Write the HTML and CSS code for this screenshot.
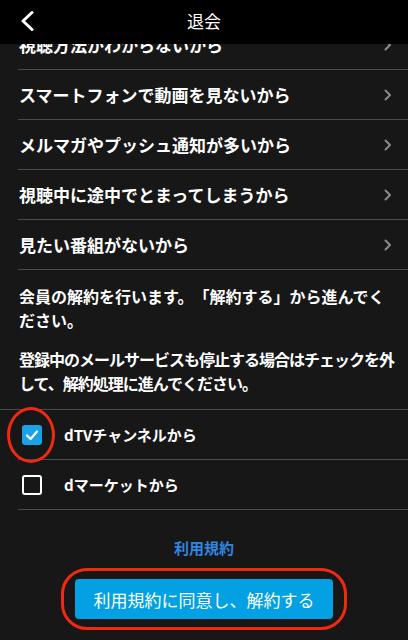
FILE: index.html
```html
<!DOCTYPE html>
<html lang="ja">
<head>
<meta charset="utf-8">
<title>退会</title>
<link rel="stylesheet" href="styles.css">
</head>
<body>
<div class="app">
  <header class="header">
    <button class="back" aria-label="戻る">
      <svg width="14" height="22" viewBox="0 0 14 22"><path d="M12 2.5 L3 11 L12 19.5" fill="none" stroke="#fff" stroke-width="3" stroke-linecap="round" stroke-linejoin="round"/></svg>
    </button>
    <h1 class="title">退会</h1>
    <span class="spacer"></span>
  </header>
  <main class="viewport">
    <div class="content">
      <ul class="reasons">
        <li class="reason"><span>視聴方法がわからないから</span><svg class="chev" width="8" height="12" viewBox="0 0 8 12"><path d="M1.5 1.5 L6 6 L1.5 10.5" fill="none" stroke="#8a8a8a" stroke-width="2" stroke-linecap="round" stroke-linejoin="round"/></svg></li>
        <li class="reason"><span>スマートフォンで動画を見ないから</span><svg class="chev" width="8" height="12" viewBox="0 0 8 12"><path d="M1.5 1.5 L6 6 L1.5 10.5" fill="none" stroke="#8a8a8a" stroke-width="2" stroke-linecap="round" stroke-linejoin="round"/></svg></li>
        <li class="reason"><span>メルマガやプッシュ通知が多いから</span><svg class="chev" width="8" height="12" viewBox="0 0 8 12"><path d="M1.5 1.5 L6 6 L1.5 10.5" fill="none" stroke="#8a8a8a" stroke-width="2" stroke-linecap="round" stroke-linejoin="round"/></svg></li>
        <li class="reason"><span>視聴中に途中でとまってしまうから</span><svg class="chev" width="8" height="12" viewBox="0 0 8 12"><path d="M1.5 1.5 L6 6 L1.5 10.5" fill="none" stroke="#8a8a8a" stroke-width="2" stroke-linecap="round" stroke-linejoin="round"/></svg></li>
        <li class="reason"><span>見たい番組がないから</span><svg class="chev" width="8" height="12" viewBox="0 0 8 12"><path d="M1.5 1.5 L6 6 L1.5 10.5" fill="none" stroke="#8a8a8a" stroke-width="2" stroke-linecap="round" stroke-linejoin="round"/></svg></li>
      </ul>
      <section class="notice">
        <p class="lead">会員の解約を行います。「解約する」から進んでください。</p>
        <p class="sub">登録中のメールサービスも停止する場合はチェックを外して、解約処理に進んでください。</p>
      </section>
      <ul class="options">
        <li class="option">
          <span class="check checked">
            <svg width="20" height="20" viewBox="0 0 20 20"><path d="M5 10.5 L8.6 14 L15 6.5" fill="none" stroke="#fff" stroke-width="2.2" stroke-linecap="round" stroke-linejoin="round"/></svg>
            <span class="ring"></span>
          </span>
          <span class="label">dTVチャンネルから</span>
        </li>
        <li class="option">
          <span class="check"></span>
          <span class="label">dマーケットから</span>
        </li>
      </ul>
      <div class="footer">
        <a class="terms" href="#">利用規約</a>
        <div class="btn-wrap">
          <button class="submit">利用規約に同意し、解約する</button>
        </div>
      </div>
    </div>
  </main>
</div>
</body>
</html>
```

FILE: styles.css
```css
* { box-sizing: border-box; }
html, body { margin: 0; padding: 0; }
body {
  background: #171717;
  color: #fff;
  font-family: "Noto Sans CJK JP", "Noto Sans", sans-serif;
}
.app {
  width: 408px;
  height: 640px;
  display: flex;
  flex-direction: column;
  overflow: hidden;
}
.header {
  height: 44px;
  flex: 0 0 44px;
  background: #000;
  display: flex;
  align-items: center;
  padding: 0 16px;
}
.back {
  background: none;
  border: 0;
  padding: 0;
  width: 30px;
  height: 30px;
  display: flex;
  align-items: center;
  justify-content: flex-start;
  margin-left: 4px;
  margin-top: -2px;
}
.title {
  flex: 1;
  margin: 0;
  text-align: center;
  font-size: 17px;
  font-weight: 400;
  line-height: 1;
  margin-top: -4px;
}
.spacer { width: 34px; }
.viewport {
  flex: 1;
  overflow: hidden;
}
.content {
  margin-top: -24px;
}
.reasons, .options {
  list-style: none;
  margin: 0;
  padding: 0 0 0 18px;
}
.reason {
  height: 50px;
  border-bottom: 1px solid #4a4a4a;
  display: flex;
  align-items: center;
  justify-content: space-between;
  padding-right: 16px;
  font-size: 17px;
  font-weight: 700;
  padding-left: 1px;
}
.chev { flex: 0 0 auto; }
.notice {
  padding: 14px 10px 14px 19px;
  border-bottom: 1px solid #4a4a4a;
}
.notice p {
  margin: 0;
  font-size: 16px;
  font-weight: 700;
  line-height: 24px;
}
.notice .lead { text-spacing-trim: space-all; }
.notice .sub { letter-spacing: -1px; margin-top: 15px; }
.options { padding-left: 18px; }
.option {
  height: 50px;
  border-bottom: 1px solid #4a4a4a;
  display: flex;
  align-items: center;
  gap: 22px;
  padding-left: 4px;
}
.check {
  position: relative;
  width: 20px;
  height: 20px;
  border: 2px solid #fff;
  border-radius: 3px;
  flex: 0 0 20px;
}
.check.checked {
  border: 0;
  background: #1ba1e6;
}
.check svg { display: block; }
.ring {
  position: absolute;
  left: -15px;
  top: -18px;
  width: 48px;
  height: 56px;
  border: 3.5px solid #f02a10;
  border-radius: 50%;
}
.label {
  font-size: 15px;
  font-weight: 700;
}
.footer {
  display: flex;
  flex-direction: column;
  align-items: center;
  padding-top: 27px;
}
.terms {
  color: #2f86e0;
  font-size: 15px;
  font-weight: 700;
  text-decoration: none;
  line-height: 22px;
}
.btn-wrap {
  margin-top: 9px;
  border: 3.5px solid #f02a10;
  border-radius: 26px;
  padding: 8px 11px;
}
.submit {
  width: 258px;
  height: 40px;
  border: 0;
  border-radius: 4px;
  background: #03a1e3;
  color: #fff;
  font-family: "Noto Sans CJK JP", "Noto Sans", sans-serif;
  font-size: 17px;
  font-weight: 400;
  padding: 0;
}
```
